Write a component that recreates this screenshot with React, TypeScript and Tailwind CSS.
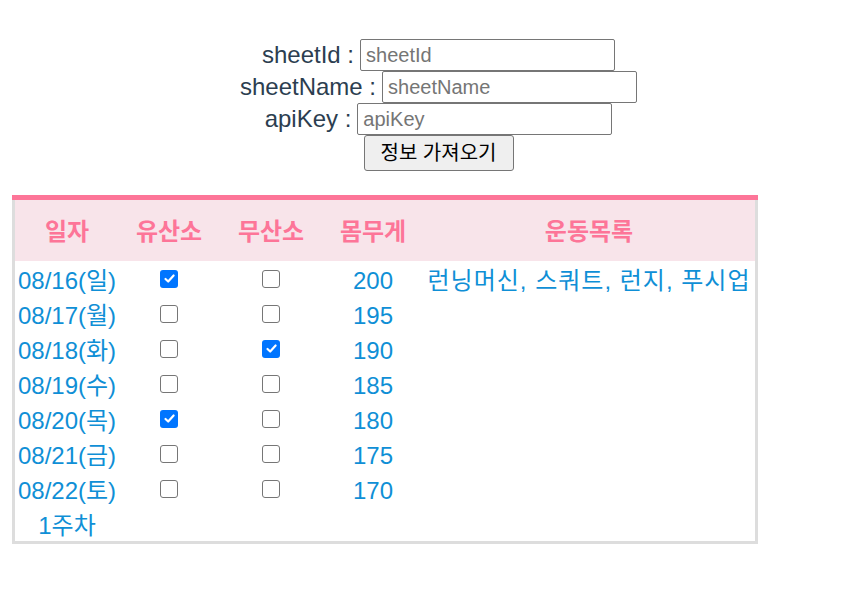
import React from 'react';

interface DayRow {
  date: string;
  cardio: boolean;
  weight: boolean;
  body: number;
  list?: string;
}

const rows: DayRow[] = [
  { date: '08/16(일)', cardio: true, weight: false, body: 200, list: '런닝머신, 스쿼트, 런지, 푸시업' },
  { date: '08/17(월)', cardio: false, weight: false, body: 195 },
  { date: '08/18(화)', cardio: false, weight: true, body: 190 },
  { date: '08/19(수)', cardio: false, weight: false, body: 185 },
  { date: '08/20(목)', cardio: true, weight: false, body: 180 },
  { date: '08/21(금)', cardio: false, weight: false, body: 175 },
  { date: '08/22(토)', cardio: false, weight: false, body: 170 },
];

const FormLine: React.FC<{ label: string; name: string }> = ({ label, name }) => (
  <div className="flex items-center justify-center h-[32px]">
    <span className="text-[24px] mr-[6px]">{label} :</span>
    <input
      type="text"
      placeholder={name}
      className="w-[255px] h-[32px] border border-[#767676] rounded-[2px] px-[5px] text-[20px] text-black placeholder:text-[#757575] bg-white outline-none"
    />
  </div>
);

// native-looking checkbox, drawn so its size matches the screenshot
const Check: React.FC<{ checked: boolean }> = ({ checked }) =>
  checked ? (
    <span className="w-[18px] h-[18px] rounded-[3px] bg-[#0075ff] flex items-center justify-center">
      <svg width="13" height="13" viewBox="0 0 12 12" fill="none">
        <path d="M2.3 6.4 L4.8 8.8 L9.8 3.2" stroke="white" strokeWidth="2" strokeLinecap="round" strokeLinejoin="round" />
      </svg>
    </span>
  ) : (
    <span className="w-[18px] h-[18px] rounded-[3px] border-[1.5px] border-[#767676] bg-white" />
  );

const App: React.FC = () => {
  return (
    <div
      className="w-[843px] min-h-[594px] bg-white text-[#2c3e50]"
      style={{ fontFamily: '"Liberation Sans", "Noto Sans CJK KR", sans-serif' }}
    >
      {/* Sheet form */}
      <div className="pt-[39px] pl-[34px] flex flex-col items-center">
        <FormLine label="sheetId" name="sheetId" />
        <FormLine label="sheetName" name="sheetName" />
        <FormLine label="apiKey" name="apiKey" />
        <button className="w-[150px] h-[36px] bg-[#efefef] border border-[#767676] rounded-[3px] text-[20px] text-black">
          정보 가져오기
        </button>
      </div>

      {/* Weekly table */}
      <div className="mt-[24px] ml-[12px] w-[746px]">
        <div className="h-[5px] bg-[#fd7598]" />
        <div className="border-x-[3px] border-b-[3px] border-[#dddddd]">
          <div className="grid grid-cols-[104px_100px_104px_100px_1fr] h-[61px] pt-[2px] bg-[#f8e4ea] items-center text-center text-[24px] font-bold text-[#fd7598]">
            <div>일자</div>
            <div>유산소</div>
            <div>무산소</div>
            <div>몸무게</div>
            <div>운동목록</div>
          </div>
          {rows.map((row) => (
            <div
              key={row.date}
              className="grid grid-cols-[104px_100px_104px_100px_1fr] h-[35px] items-center text-center text-[24px] text-[#0f8fd6]"
            >
              <div className="whitespace-nowrap pt-[2px]">{row.date}</div>
              <div className="flex justify-center -mt-[3px]">
                <Check checked={row.cardio} />
              </div>
              <div className="flex justify-center -mt-[3px]">
                <Check checked={row.weight} />
              </div>
              <div className="pt-[2px]">{row.body}</div>
              <div className="whitespace-nowrap pt-[2px] tracking-[1px]">{row.list ?? ''}</div>
            </div>
          ))}
          <div className="grid grid-cols-[104px_100px_104px_100px_1fr] h-[35px] items-center text-center text-[24px] text-[#0f8fd6]">
            <div className="pt-[2px]">1주차</div>
          </div>
        </div>
      </div>
    </div>
  );
};

export default App;
